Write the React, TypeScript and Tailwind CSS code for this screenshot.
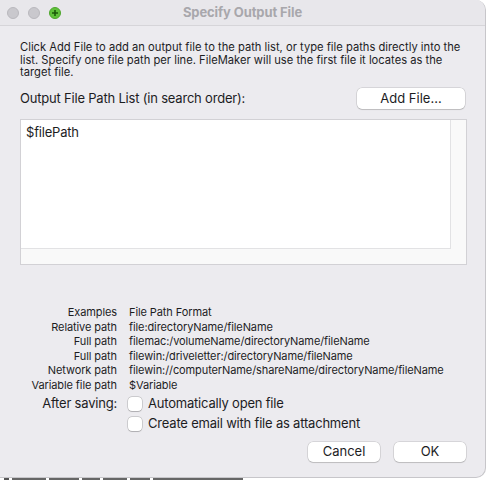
export default function App() {
  const examples = [
    ['Examples', 'File Path Format'],
    ['Relative path', 'file:directoryName/fileName'],
    ['Full path', 'filemac:/volumeName/directoryName/fileName'],
    ['Full path', 'filewin:/driveletter:/directoryName/fileName'],
    ['Network path', 'filewin://computerName/shareName/directoryName/fileName'],
    ['Variable file path', '$Variable'],
  ]

  const btn =
    'bg-white rounded-[5px] text-[13px] shadow-[0_0_0_0.5px_rgba(0,0,0,0.18),0_1px_1px_rgba(0,0,0,0.12)]'
  const box =
    'w-[14px] h-[14px] shrink-0 rounded-[4px] bg-white shadow-[0_0_0_0.5px_rgba(0,0,0,0.25),0_0.5px_1px_rgba(0,0,0,0.15)]'

  return (
    <div className="w-[488px] h-[481px] bg-white overflow-hidden text-[#1d1d1f]" style={{ fontFamily: 'Inter, "Liberation Sans", sans-serif' }}>
      {/* Window */}
      <div className="w-[486px] h-[478px] bg-[#ecebef] rounded-tr-[10px] rounded-br-[10px] border-r border-b border-[#c7c6ca] flex flex-col">
        {/* Title bar */}
        <div className="h-[26px] shrink-0 flex items-center border-b border-[#d6d5d9] bg-[#e8e7eb] rounded-tr-[10px]">
          <div className="flex items-center gap-[9px] pl-[7px] w-[120px]">
            <span className="w-[12px] h-[12px] rounded-full bg-[#c9c8cd] border border-[#b9b8bd]" />
            <span className="w-[12px] h-[12px] rounded-full bg-[#c9c8cd] border border-[#b9b8bd]" />
            <span className="w-[12px] h-[12px] rounded-full bg-[#5fc13a] border border-[#4da62c] flex items-center justify-center">
              <svg width="8" height="8" viewBox="0 0 8 8">
                <path d="M4 1v6M1 4h6" stroke="#1b5a0a" strokeWidth="1.6" />
              </svg>
            </span>
          </div>
          <div className="flex-1 text-center text-[13px] font-bold text-[#a8a7ac] pr-[120px] tracking-[-0.1px]">
            Specify Output File
          </div>
        </div>

        {/* Content */}
        <div className="flex flex-col px-[20px]">
          <p className="mt-[15px] text-[11.2px] leading-[12.7px] whitespace-nowrap">
            Click Add File to add an output file to the path list, or type file paths directly into the
            <br />
            list. Specify one file path per line. FileMaker will use the first file it locates as the
            <br />
            target file.
          </p>

          <div className="mt-[9px] flex items-center justify-between">
            <span className="text-[13px] tracking-[-0.2px]">Output File Path List (in search order):</span>
            <button className={`w-[108px] h-[21px] ${btn}`}>Add File...</button>
          </div>

          {/* Path list */}
          <div className="mt-[10px] w-[447px] h-[146px] border border-[#d2d1d5] bg-[#f9f9f9] flex flex-col">
            <div className="flex flex-1">
              <div className="w-[430px] bg-white border-r border-b border-[#e2e2e4] px-[5px] pt-[3px] text-[13px] tracking-[-0.2px]">
                $filePath
              </div>
              <div className="flex-1" />
            </div>
            <div className="h-[15px]" />
          </div>

          {/* Examples */}
          <div className="mt-[40px] flex flex-col text-[11px] leading-[14.6px] tracking-[-0.1px]">
            {examples.map(([label, value], i) => (
              <div key={i} className="flex whitespace-nowrap">
                <span className="w-[97px] shrink-0 text-right">{label}</span>
                <span className="ml-[12px]">{value}</span>
              </div>
            ))}
          </div>

          {/* After saving */}
          <div className="mt-[1px] flex flex-col text-[13px] tracking-[-0.2px]">
            <div className="flex items-center h-[20px]">
              <span className="w-[97px] shrink-0 text-right">After saving:</span>
              <label className="ml-[11px] flex items-center gap-[6px]">
                <span className={box} />
                Automatically open file
              </label>
            </div>
            <div className="flex items-center h-[20px]">
              <label className="ml-[108px] flex items-center gap-[6px]">
                <span className={box} />
                Create email with file as attachment
              </label>
            </div>
          </div>

          {/* Buttons */}
          <div className="mt-[8px] flex justify-end gap-[14px] w-[446px]">
            <button className={`w-[72px] h-[20px] ${btn}`}>Cancel</button>
            <button className={`w-[72px] h-[20px] ${btn}`}>OK</button>
          </div>
        </div>
      </div>

      {/* Background content peeking below the window */}
      <div className="flex items-start gap-[3px] pl-[4px] h-[3px]">
        <span className="w-[5px] h-[2px] bg-[#555]" />
        <span className="w-[34px] h-[2px] bg-[#666]" />
        <span className="w-[30px] h-[2px] bg-[#666]" />
        <span className="w-[18px] h-[2px] bg-[#666]" />
        <span className="w-[24px] h-[2px] bg-[#666]" />
        <span className="w-[20px] h-[2px] bg-[#666]" />
        <span className="w-[90px] h-[2px] bg-[#666]" />
      </div>
    </div>
  )
}
